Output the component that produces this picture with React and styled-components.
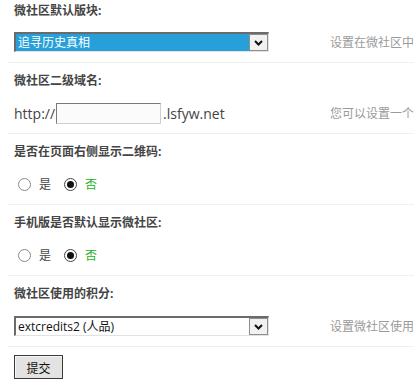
import React from "react";
import styled, { createGlobalStyle } from "styled-components";

const GlobalStyle = createGlobalStyle`
  html, body {
    margin: 0;
    padding: 0;
    background: #fff;
  }
  body {
    font-family: "Open Sans", "Noto Sans CJK SC", sans-serif;
    font-size: 12px;
    color: #333;
  }
`;

const Page = styled.div`
  width: 100vw;
  overflow: hidden;
  padding-left: 8px;
  box-sizing: border-box;
`;

const Section = styled.div`
  border-top: ${p => (p.first ? "none" : "1px solid #f0f0f0")};
`;

const Label = styled.div`
  padding: ${p => (p.first ? "4px 6px 6px" : "11px 6px 7px")};
  line-height: 14px;
  font-size: 12px;
  font-weight: bold;
  color: #444;
`;

const Row = styled.div`
  display: grid;
  grid-template-columns: 316px auto;
  align-items: center;
  height: 38px;
  padding-bottom: 2px;
  box-sizing: border-box;
`;

const Cell = styled.div`
  display: flex;
  align-items: center;
  padding-left: 6px;
`;

const Hint = styled.div`
  padding-left: 6px;
  color: #9a9a9a;
  font-size: 12px;
  white-space: nowrap;
`;

const SelectBox = styled.div`
  display: flex;
  width: 255px;
  height: 20px;
  box-sizing: border-box;
  border-style: solid;
  border-width: 2px 1px 1px 2px;
  border-color: #6b6b6b #e2e2e2 #e2e2e2 #6b6b6b;
  background: #fff;
`;

const SelectValue = styled.div`
  flex: 1;
  display: flex;
  align-items: center;
  padding-left: 2px;
  font-size: 12px;
  line-height: 17px;
  background: ${p => (p.focused ? "#279fd9" : "#fff")};
  color: ${p => (p.focused ? "#fff" : "#111")};
  white-space: nowrap;
  overflow: hidden;
`;

const ArrowBox = styled.div`
  width: 19px;
  height: 17px;
  box-sizing: border-box;
  border: 1px solid #8e8e8e;
  background: #f1f1f1;
  display: flex;
  align-items: center;
  justify-content: center;
`;

const Text = styled.span`
  font-size: 14px;
  color: #444;
  white-space: nowrap;
`;

const TextInput = styled.input`
  width: 105px;
  height: 21px;
  box-sizing: border-box;
  margin: 0 2px 0 1px;
  padding: 0 2px;
  border-style: solid;
  border-width: 1px;
  border-color: #7a7a7a #d0d0d0 #d0d0d0 #7a7a7a;
  background: #fbfbfb;
  outline: none;
`;

const RadioGroup = styled.div`
  display: flex;
  align-items: center;
  padding-left: 4px;
`;

const Radio = styled.span`
  width: 13px;
  height: 13px;
  box-sizing: border-box;
  border-radius: 50%;
  border: 1px solid ${p => (p.checked ? "#444" : "#8a8a8a")};
  background: #fff;
  display: flex;
  align-items: center;
  justify-content: center;
  margin-right: 8px;

  &::after {
    content: "";
    display: ${p => (p.checked ? "block" : "none")};
    width: 7px;
    height: 7px;
    border-radius: 50%;
    background: #111;
  }
`;

const RadioText = styled.span`
  font-size: 12px;
  color: ${p => (p.active ? "#22b322" : "#444")};
  margin-right: 13px;
`;

const Footer = styled.div`
  border-top: 1px solid #f0f0f0;
  padding: 8px 6px;
`;

const SubmitButton = styled.button`
  width: 49px;
  height: 24px;
  padding: 0;
  font-family: "Noto Sans CJK SC", sans-serif;
  font-size: 12px;
  color: #111;
  background: #e3e3e3;
  border: 1px solid #3a3a3a;
  box-shadow: inset 1px 1px 0 #f7f7f7;
`;

const Chevron = () => (
  <svg width="9" height="6" viewBox="0 0 9 6">
    <path d="M1 1 L4.5 4.5 L8 1" fill="none" stroke="#111" strokeWidth="2" />
  </svg>
);

const FakeSelect = ({ value, focused }) => (
  <SelectBox>
    <SelectValue focused={focused}>{value}</SelectValue>
    <ArrowBox>
      <Chevron />
    </ArrowBox>
  </SelectBox>
);

const YesNo = () => (
  <RadioGroup>
    <Radio />
    <RadioText>是</RadioText>
    <Radio checked />
    <RadioText active>否</RadioText>
  </RadioGroup>
);

const App = () => (
  <>
    <GlobalStyle />
    <Page>
      <Section first>
        <Label first>微社区默认版块:</Label>
        <Row>
          <Cell>
            <FakeSelect value="追寻历史真相" focused />
          </Cell>
          <Hint>设置在微社区中</Hint>
        </Row>
      </Section>
      <Section>
        <Label>微社区二级域名:</Label>
        <Row>
          <Cell>
            <Text>http://</Text>
            <TextInput type="text" />
            <Text>.lsfyw.net</Text>
          </Cell>
          <Hint>您可以设置一个</Hint>
        </Row>
      </Section>
      <Section>
        <Label>是否在页面右侧显示二维码:</Label>
        <Row>
          <Cell>
            <YesNo />
          </Cell>
          <Hint />
        </Row>
      </Section>
      <Section>
        <Label>手机版是否默认显示微社区:</Label>
        <Row>
          <Cell>
            <YesNo />
          </Cell>
          <Hint />
        </Row>
      </Section>
      <Section>
        <Label>微社区使用的积分:</Label>
        <Row>
          <Cell>
            <FakeSelect value="extcredits2 (人品)" />
          </Cell>
          <Hint>设置微社区使用</Hint>
        </Row>
      </Section>
      <Footer>
        <SubmitButton>提交</SubmitButton>
      </Footer>
    </Page>
  </>
);

export default App;
